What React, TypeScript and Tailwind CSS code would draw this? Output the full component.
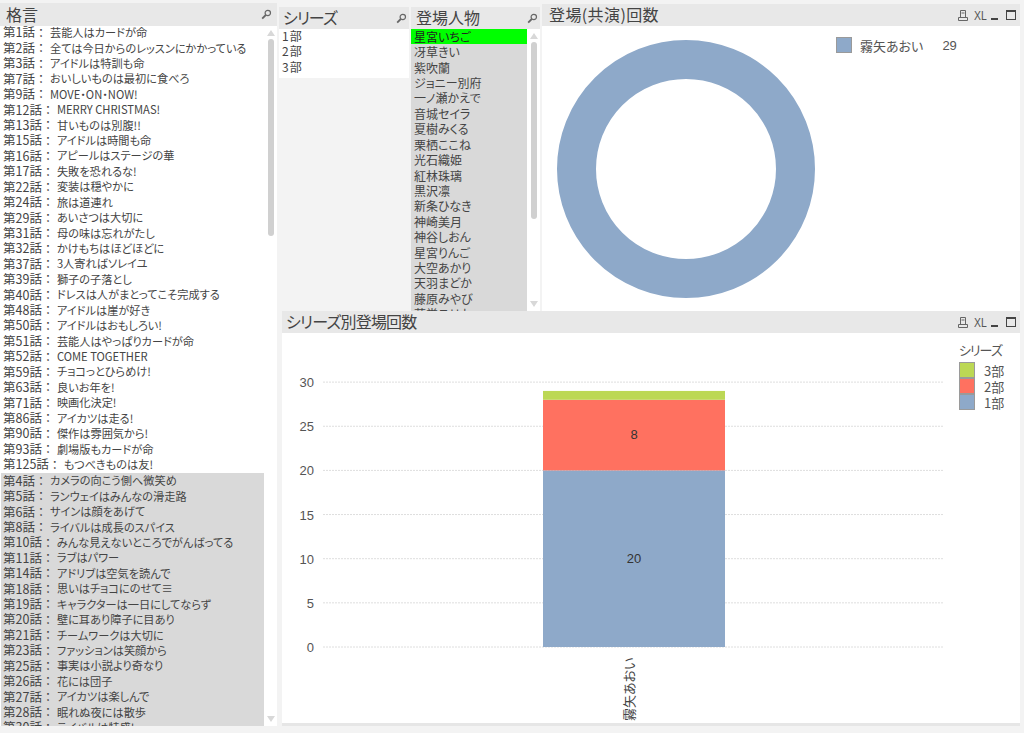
import type { ReactNode } from "react";

const fontCls = "font-['Noto_Sans_CJK_JP','Liberation_Sans',sans-serif] [font-feature-settings:'palt']";

const sayings: [string, string][] = [
  ["第1話", "芸能人はカードが命"],
  ["第2話", "全ては今日からのレッスンにかかっている"],
  ["第3話", "アイドルは特訓も命"],
  ["第7話", "おいしいものは最初に食べろ"],
  ["第9話", "MOVE・ON・NOW!"],
  ["第12話", "MERRY CHRISTMAS!"],
  ["第13話", "甘いものは別腹!!"],
  ["第15話", "アイドルは時間も命"],
  ["第16話", "アピールはステージの華"],
  ["第17話", "失敗を恐れるな!"],
  ["第22話", "変装は穏やかに"],
  ["第24話", "旅は道連れ"],
  ["第29話", "あいさつは大切に"],
  ["第31話", "母の味は忘れがたし"],
  ["第32話", "かけもちはほどほどに"],
  ["第37話", "3人寄ればソレイユ"],
  ["第39話", "獅子の子落とし"],
  ["第40話", "ドレスは人がまとってこそ完成する"],
  ["第48話", "アイドルは崖が好き"],
  ["第50話", "アイドルはおもしろい!"],
  ["第51話", "芸能人はやっぱりカードが命"],
  ["第52話", "COME TOGETHER"],
  ["第59話", "チョコっとひらめけ!"],
  ["第63話", "良いお年を!"],
  ["第71話", "映画化決定!"],
  ["第86話", "アイカツは走る!"],
  ["第90話", "傑作は雰囲気から!"],
  ["第93話", "劇場版もカードが命"],
  ["第125話", "もつべきものは友!"],
];

const greySayings: [string, string][] = [
  ["第4話", "カメラの向こう側へ微笑め"],
  ["第5話", "ランウェイはみんなの滑走路"],
  ["第6話", "サインは顔をあげて"],
  ["第8話", "ライバルは成長のスパイス"],
  ["第10話", "みんな見えないところでがんばってる"],
  ["第11話", "ラブはパワー"],
  ["第14話", "アドリブは空気を読んで"],
  ["第18話", "思いはチョコにのせて≡"],
  ["第19話", "キャラクターは一日にしてならず"],
  ["第20話", "壁に耳あり障子に目あり"],
  ["第21話", "チームワークは大切に"],
  ["第23話", "ファッションは笑顔から"],
  ["第25話", "事実は小説より奇なり"],
  ["第26話", "花には団子"],
  ["第27話", "アイカツは楽しんで"],
  ["第28話", "眠れぬ夜には散歩"],
  ["第30話", "ライバルは特盛!"],
];

const characters = [
  "冴草きい",
  "紫吹蘭",
  "ジョニー別府",
  "一ノ瀬かえで",
  "音城セイラ",
  "夏樹みくる",
  "栗栖ここね",
  "光石織姫",
  "紅林珠璃",
  "黒沢凛",
  "新条ひなき",
  "神崎美月",
  "神谷しおん",
  "星宮りんご",
  "大空あかり",
  "天羽まどか",
  "藤原みやび",
  "藤堂ユリカ",
];

function Loupe() {
  return (
    <svg width="11" height="11" viewBox="0 0 11 11" fill="none" stroke="#666" className="shrink-0">
      <circle cx="6.8" cy="4" r="2.7" strokeWidth="1.2" />
      <path d="M4.8 6 L1.2 9.6" strokeWidth="1.8" />
    </svg>
  );
}

function CaptionTools() {
  return (
    <div className="flex items-center text-[#555]">
      <svg width="10" height="11" viewBox="0 0 10 11" fill="none" stroke="#666" strokeWidth="1">
        <path d="M2.5 .5 H7.5 V7.5 H2.5 Z M.5 7.5 H9.5 V10.5 H.5 Z M3.5 3 H6.5" />
      </svg>
      <span className="ml-[6px] w-[11px] origin-left scale-x-[0.8] font-['Liberation_Sans',sans-serif] text-[13px] leading-none">
        XL
      </span>
      <span className="ml-[6px] mt-[7px] h-[2px] w-[7px] bg-[#444]" />
      <span className="ml-[8px] h-[10px] w-[10px] border border-t-2 border-[#444]" />
    </div>
  );
}

function Caption({
  title,
  tools,
  className,
  titleClass = "",
}: {
  title: string;
  tools?: boolean;
  className: string;
  titleClass?: string;
}) {
  return (
    <div className={`flex items-center justify-between bg-[#e8e8e8] ${className}`}>
      <span className={`pb-[2px] text-[16px] leading-none text-[#444] ${titleClass}`}>{title}</span>
      {tools ? <CaptionTools /> : <Loupe />}
    </div>
  );
}

function Scrollbar({ thumbTop, thumbHeight }: { thumbTop: string; thumbHeight: string }) {
  return (
    <div className="flex h-full w-[13px] shrink-0 flex-col items-center bg-white">
      <span className="mt-[4px] h-0 w-0 border-x-[4px] border-b-[6px] border-x-transparent border-b-[#d8d8d8]" />
      <span className={`w-[6px] rounded-[3px] bg-[#d0d0d0] ${thumbTop} ${thumbHeight}`} />
      <span className="mb-[4px] mt-auto h-0 w-0 border-x-[4px] border-t-[6px] border-x-transparent border-t-[#d8d8d8]" />
    </div>
  );
}

function SayingRow({ label, text }: { label: string; text: string }) {
  return (
    <div className="flex h-[15.43px] items-center whitespace-nowrap pb-[2px] pl-[2px] leading-none text-[#444]">
      <span className="text-[12.5px]">{label}</span>
      <span className="ml-[3px] text-[12px]">：</span>
      <span className="ml-[6px] text-[11.2px]">{text}</span>
    </div>
  );
}

function LegendSwatch({ className }: { className: string }) {
  return <span className={`block h-[16px] w-[16px] border border-[#9a9a9a] ${className}`} />;
}

function DonutChart() {
  return (
    <svg width="264" height="264" viewBox="0 0 264 264" className="absolute left-[12px] top-[11px]">
      <circle cx="132" cy="132" r="109.5" fill="none" stroke="#8ea9c9" strokeWidth="39" />
    </svg>
  );
}

const ticks = [30, 25, 20, 15, 10, 5, 0];
const unit = 8.83;

function StackedChart() {
  const y = (v: number) => 314 - v * unit;
  return (
    <svg width="680" height="400" viewBox="0 0 680 400" className="absolute left-0 top-0">
      {ticks.map((t) => (
        <g key={t}>
          <line x1="41" x2="662" y1={y(t)} y2={y(t)} stroke="#dedede" strokeDasharray="2 1" />
          <text x="32" y={y(t) + 5} textAnchor="end" fontSize="13" fill="#555" fontFamily="Liberation Sans">
            {t}
          </text>
        </g>
      ))}
      <rect x="261" y={y(20)} width="182" height={20 * unit} fill="#8ea9c9" />
      <rect x="261" y={y(28)} width="182" height={8 * unit} fill="#ff7160" />
      <rect x="261" y={y(29)} width="182" height={unit} fill="#bcd854" />
      <text x="352" y={y(10) + 4} textAnchor="middle" fontSize="13" fill="#333" fontFamily="Liberation Sans">
        20
      </text>
      <text x="352" y={y(24) + 4} textAnchor="middle" fontSize="13" fill="#333" fontFamily="Liberation Sans">
        8
      </text>
      <text
        transform="translate(352 388) rotate(-90)"
        fontSize="13"
        fill="#444"
        fontFamily="Noto Sans CJK JP"
        style={{ fontFeatureSettings: "'palt'" }}
      >
        霧矢あおい
      </text>
    </svg>
  );
}

function Panel({ children, className }: { children: ReactNode; className: string }) {
  return <section className={`flex flex-col ${className}`}>{children}</section>;
}

export default function App() {
  return (
    <div className={`flex h-[733px] w-[1024px] overflow-hidden bg-[#f3f3f3] ${fontCls}`}>
      <Panel className="ml-0 mt-[3px] h-[723px] w-[277px] shrink-0">
        <Caption title="格言" className="h-[23px] pl-[6px] pr-[5px]" />
        <div className="flex h-[700px] bg-white">
          <div className="h-full w-[265px] overflow-hidden pl-[1px]">
            {sayings.map(([label, text]) => (
              <SayingRow key={label} label={label} text={text} />
            ))}
            <div className="bg-[#d9d9d9] pt-[1px]">
              {greySayings.map(([label, text]) => (
                <SayingRow key={label} label={label} text={text} />
              ))}
            </div>
          </div>
          <Scrollbar thumbTop="mt-[3px]" thumbHeight="h-[197px]" />
        </div>
      </Panel>

      <div className="ml-[2px] flex h-[733px] flex-1 flex-col">
        <div className="flex h-[311px] overflow-hidden">
          <Panel className="mt-[7px] w-[130px] shrink-0">
            <Caption title="シリーズ" className="h-[22px] pl-[4px] pr-[2px]" titleClass="tracking-[-1px]" />
            <div className="bg-white pb-[3px] pl-[1px] text-[12px] leading-[13px] text-[#444]">
              <div className="h-[15.43px] pl-[2px] tracking-[1px]">1部</div>
              <div className="h-[15.43px] pl-[2px] tracking-[1px]">2部</div>
              <div className="h-[15.43px] pl-[2px] tracking-[1px]">3部</div>
            </div>
          </Panel>

          <Panel className="ml-[2px] mt-[7px] w-[129px] shrink-0">
            <Caption title="登場人物" className="h-[22px] pl-[5px] pr-[2px]" />
            <div className="flex h-[282px] bg-white">
              <div className="flex-1 overflow-hidden bg-[#d9d9d9] text-[12px] leading-none text-[#444]">
                <div className="flex h-[15.43px] items-center bg-[#00ff00] pl-[3px] text-[#222]">星宮いちご</div>
                {characters.map((name) => (
                  <div key={name} className="flex h-[15.43px] items-center pl-[3px]">
                    {name}
                  </div>
                ))}
              </div>
              <Scrollbar thumbTop="mt-[3px]" thumbHeight="h-[177px]" />
            </div>
          </Panel>

          <Panel className="ml-[2px] mt-[4px] h-[307px] flex-1 pr-[4px]">
            <Caption title="登場(共演)回数" tools className="h-[22px] shrink-0 pl-[7px] pr-[4px]" titleClass="tracking-[0.4px]" />
            <div className="relative flex-1 bg-white">
              <DonutChart />
              <div className="absolute left-[294px] top-[11px] flex items-center text-[13px] leading-none text-[#555]">
                <LegendSwatch className="bg-[#8ea9c9]" />
                <span className="ml-[8px]">霧矢あおい</span>
                <span className="ml-[19px] font-['Liberation_Sans',sans-serif]">29</span>
              </div>
            </div>
          </Panel>
        </div>

        <Panel className="ml-[3px] mr-[4px] h-[415px] border-b-[3px] border-[#e6e6e6]">
          <Caption title="シリーズ別登場回数" tools className="h-[22px] shrink-0 pl-[4px] pr-[4px]" titleClass="tracking-[-0.8px]" />
          <div className="relative flex-1 bg-white">
            <StackedChart />
            <div className="absolute left-[677px] top-[10px] text-[13px] leading-none text-[#555]">
              <div className="mb-[5px] h-[14px] tracking-[-1px]">シリーズ</div>
              {[
                ["3部", "bg-[#bcd854]"],
                ["2部", "bg-[#ff7160]"],
                ["1部", "bg-[#8ea9c9]"],
              ].map(([label, color]) => (
                <div key={label} className="flex h-[16px] items-center">
                  <LegendSwatch className={color} />
                  <span className="ml-[9px]">{label}</span>
                </div>
              ))}
            </div>
          </div>
        </Panel>
      </div>
    </div>
  );
}
